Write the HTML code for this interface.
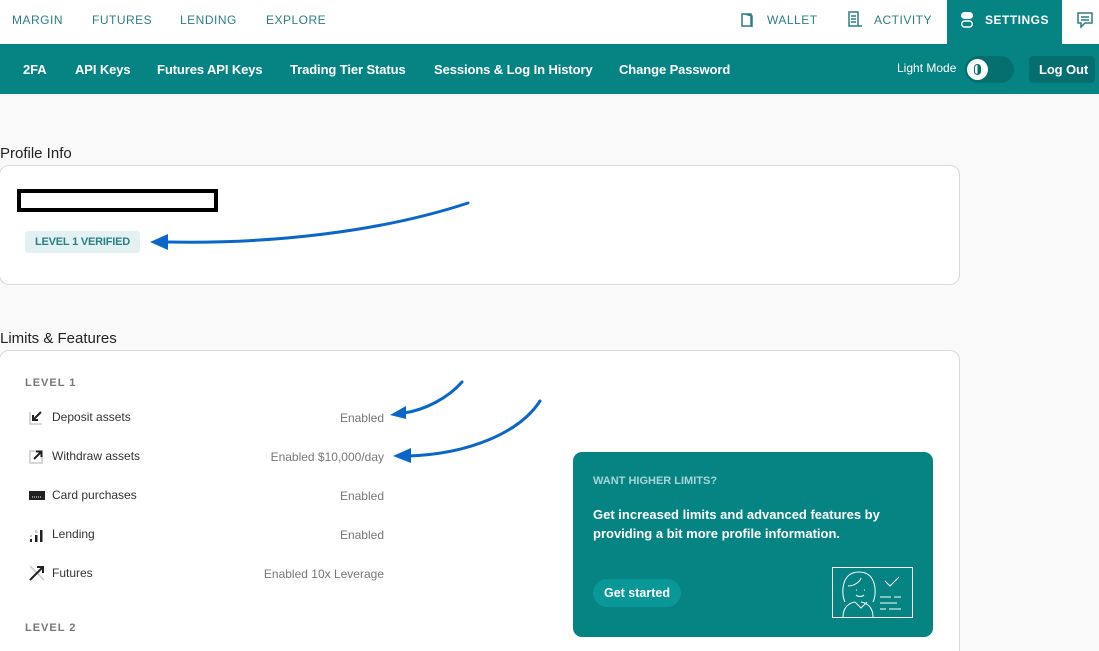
<!DOCTYPE html>
<html><head><style>
html,body{margin:0;width:1099px;height:651px;overflow:hidden}
body{background:#f9f9f9;font-family:"Liberation Sans",sans-serif;position:relative}
.top{position:absolute;left:0;top:0;width:1099px;height:44px;background:#fff}
.tn{position:absolute;top:13px;font-size:12px;color:#2a7f84;letter-spacing:.5px}
.sub{position:absolute;left:0;top:44px;width:1099px;height:50px;background:#068383}
.sn{position:absolute;top:18px;font-size:13px;font-weight:bold;color:#fff;letter-spacing:-.1px}
.card{position:absolute;background:#fff;border:1px solid #d8d8d8;border-radius:10px}
.h{position:absolute;left:0;font-size:15px;color:#222}
.row{position:absolute;left:52px;font-size:12px;color:#333}
.val{position:absolute;right:715px;font-size:12px;color:#777;text-align:right}
.ic{position:absolute;left:29px;width:16px;height:16px}
.lv{position:absolute;left:25px;font-size:11px;font-weight:bold;color:#777;letter-spacing:1px}
</style></head><body>
<div class="top">
<span class="tn" style="left:12px">MARGIN</span>
<span class="tn" style="left:92px">FUTURES</span>
<span class="tn" style="left:180px">LENDING</span>
<span class="tn" style="left:266px">EXPLORE</span>
<svg style="position:absolute;left:740px;top:12px" width="16" height="16"><path d="M2 2h9v12H2zM5 2l7 2v11" fill="none" stroke="#2a7f84" stroke-width="1.5"/></svg>
<span class="tn" style="left:767px">WALLET</span>
<svg style="position:absolute;left:847px;top:11px" width="16" height="17"><path d="M2 1h9v14H2zM4 5h5M4 8h5M4 11h5M11 15h4" fill="none" stroke="#2a7f84" stroke-width="1.5"/></svg>
<span class="tn" style="left:874px">ACTIVITY</span>
<div style="position:absolute;left:947px;top:0;width:115px;height:44px;background:#068383"></div>
<svg style="position:absolute;left:960px;top:11px" width="14" height="18"><rect x="1" y="1" width="12" height="7" rx="3.5" fill="#fff"/><rect x="1.7" y="10" width="10.6" height="6" rx="3" fill="none" stroke="#fff" stroke-width="1.4"/></svg>
<span class="tn" style="left:985px;color:#fff;font-weight:bold">SETTINGS</span>
<svg style="position:absolute;left:1076px;top:11px" width="18" height="18"><path d="M2 2h14v10H9l-4 4v-4H2z M5 6h8M5 9h8" fill="none" stroke="#2a7f84" stroke-width="1.5"/></svg>
</div>
<div class="sub">
<span class="sn" style="left:23px">2FA</span>
<span class="sn" style="left:75px">API Keys</span>
<span class="sn" style="left:157px">Futures API Keys</span>
<span class="sn" style="left:290px">Trading Tier Status</span>
<span class="sn" style="left:434px">Sessions &amp; Log In History</span>
<span class="sn" style="left:619px">Change Password</span>
<span style="position:absolute;left:897px;top:17px;font-size:12px;color:#fff">Light Mode</span>
<div style="position:absolute;left:965px;top:12px;width:49px;height:27px;border-radius:14px;background:#056f70"></div>
<div style="position:absolute;left:967px;top:15px;width:21px;height:21px;border-radius:50%;background:#fff"></div>
<div style="position:absolute;left:974px;top:20px;width:7px;height:11px;border-radius:6px;border:1.5px solid #056f70;box-sizing:border-box;background:linear-gradient(90deg,#fff 50%,#056f70 50%)"></div>
<div style="position:absolute;left:1029px;top:12px;width:66px;height:27px;border-radius:4px;background:#056f70"></div>
<span class="sn" style="left:1039px;top:18px">Log Out</span>
</div>
<div class="h" style="top:145px">Profile Info</div>
<div class="card" style="left:-1px;top:165px;width:959px;height:118px"></div>
<div style="position:absolute;left:17px;top:189px;width:193px;height:15px;border:4px solid #000;background:#fff"></div>
<div style="position:absolute;left:25px;top:231px;width:115px;height:22px;border-radius:3px;background:#e3f1f2;color:#2a7f84;font-size:11px;font-weight:bold;line-height:22px;text-align:center;letter-spacing:-.2px">LEVEL 1 VERIFIED</div>
<div class="h" style="top:330px">Limits &amp; Features</div>
<div class="card" style="left:-1px;top:350px;width:959px;height:320px"></div>
<div class="lv" style="top:377px">LEVEL 1</div>
<div class="lv" style="top:622px">LEVEL 2</div>
<svg class="ic" style="top:409px"><path d="M1 3v12h12" fill="none" stroke="#ccc" stroke-width="1.6"/><path d="M12 3L5 10M4 6v5h5" fill="none" stroke="#222" stroke-width="2"/></svg>
<div class="row" style="top:410px">Deposit assets</div><div class="val" style="top:411px">Enabled</div>
<svg class="ic" style="top:448px"><path d="M8 3H1v12h12V8" fill="none" stroke="#ccc" stroke-width="1.6"/><path d="M5 11l7-7M7 3.5h5.5V9" fill="none" stroke="#222" stroke-width="2"/></svg>
<div class="row" style="top:449px">Withdraw assets</div><div class="val" style="top:450px">Enabled $10,000/day</div>
<svg class="ic" style="top:488px"><rect x="0" y="3" width="16" height="9" fill="#222"/><path d="M3 9h10" stroke="#fff" stroke-dasharray="1 1"/></svg>
<div class="row" style="top:488px">Card purchases</div><div class="val" style="top:489px">Enabled</div>
<svg class="ic" style="top:527px"><rect x="1" y="12" width="2" height="3" fill="#222"/><rect x="1" y="8" width="2" height="2" fill="#ccc"/><rect x="6" y="8" width="2.5" height="7" fill="#222"/><rect x="6" y="3" width="2.5" height="3" fill="#ccc"/><rect x="11" y="3" width="2.5" height="12" fill="#222"/></svg>
<div class="row" style="top:527px">Lending</div><div class="val" style="top:528px">Enabled</div>
<svg class="ic" style="top:565px"><path d="M1 1l14 14" stroke="#ccc" stroke-width="1.6"/><path d="M1 15L14 2M8 2h6v6" fill="none" stroke="#222" stroke-width="2"/></svg>
<div class="row" style="top:566px">Futures</div><div class="val" style="top:567px">Enabled 10x Leverage</div>
<div style="position:absolute;left:573px;top:452px;width:360px;height:185px;border-radius:9px;background:#068383"></div>
<div style="position:absolute;left:593px;top:475px;font-size:11px;font-weight:bold;color:#a9d6d6">WANT HIGHER LIMITS?</div>
<div style="position:absolute;left:593px;top:505px;width:320px;font-size:13px;font-weight:bold;color:#fff;line-height:19px">Get increased limits and advanced features by providing a bit more profile information.</div>
<div style="position:absolute;left:593px;top:579px;width:88px;height:28px;border-radius:14px;background:#0a9797;color:#fff;font-size:12.5px;font-weight:bold;line-height:28px;text-align:center">Get started</div>
<svg style="position:absolute;left:831px;top:566px" width="83" height="53" fill="none" stroke="#fff" stroke-width="1"><rect x="1.5" y="1.5" width="80" height="50"/><path d="M12 51c0-10 6-14 12-15M42 51c0-10-6-14-12-15M24 36l6 6 6-6M14 36c-4-8-4-30 14-30s18 22 14 30M17 20c6 0 12-4 13-8M25 24h1M33 24h1M25 29c2 2 6 2 8 0M54 15l5 5 9-9M49 31h11M63 31h7M49 37h17M49 43h6M58 43h12"/></svg>
<svg style="position:absolute;left:0;top:0" width="1099" height="651" fill="none" stroke="#0a66c8" stroke-width="3" stroke-linecap="round">
<path d="M468 203C380 232 270 244 168 242"/>
<path d="M462 382C448 398 425 410 404 413"/>
<path d="M540 401C520 432 470 454 408 456"/>
<g fill="#0a66c8" stroke="none"><path d="M150 242l18-8v16z"/><path d="M390 415l16-9v13z"/><path d="M393 456l18-8v15z"/></g>
</svg>
</body></html>
